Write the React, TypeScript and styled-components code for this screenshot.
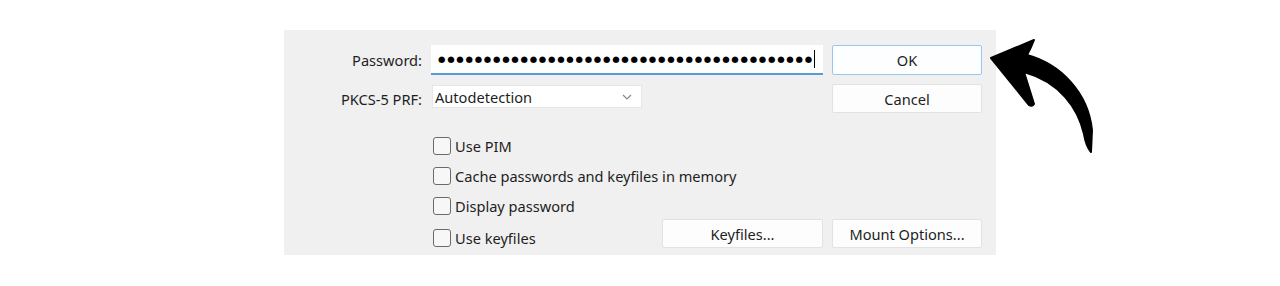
import React from "react";
import styled, { createGlobalStyle } from "styled-components";

const Global = createGlobalStyle`
  html, body { margin: 0; padding: 0; background: #ffffff; }
  body { font-family: "Noto Sans", "Segoe UI", sans-serif; }
`;

const Page = styled.div`
  position: relative;
  width: 1280px;
  height: 286px;
  padding-top: 30px;
  box-sizing: border-box;
`;

const Panel = styled.div`
  margin-left: 284px;
  width: 712px;
  height: 225px;
  background: #f0f0f0;
  box-sizing: border-box;
  padding-top: 15px;
  display: flex;
  flex-direction: column;
  font-size: 14.6px;
  color: #1e1e1e;
`;

const Row = styled.div<{ $h: number; $mt?: number }>`
  display: flex;
  align-items: center;
  height: ${(p) => p.$h}px;
  margin-top: ${(p) => p.$mt ?? 0}px;
`;

const Label = styled.div`
  width: 138px;
  text-align: right;
  flex: none;
  margin-right: 9px;
`;

const Field = styled.div`
  width: 392px;
  height: 100%;
  flex: none;
  margin-right: 9px;
  display: flex;
  align-items: center;
  justify-content: space-between;
`;

const PasswordBox = styled.div`
  width: 100%;
  height: 100%;
  background: #ffffff;
  border-bottom: 2px solid #5b9bd5;
  box-sizing: border-box;
  display: flex;
  align-items: center;
  padding-left: 7px;
`;

const Dots = styled.span`
  font-family: "DejaVu Sans", sans-serif;
  font-size: 8.5px;
  letter-spacing: 1.75px;
  color: #000;
  white-space: nowrap;
`;

const Caret = styled.span`
  display: inline-block;
  width: 1px;
  height: 18px;
  background: #000;
  margin-left: 0px;
`;

const Select = styled.div`
  margin-left: 1px;
  width: 210px;
  height: 23px;
  background: #ffffff;
  border: 1px solid #e6e6e6;
  box-sizing: border-box;
  display: flex;
  align-items: center;
  justify-content: space-between;
  padding: 0 9px 0 2px;
  align-self: flex-start;
  margin-top: 1px;
`;

const Button = styled.div<{ $w?: number; $focus?: boolean }>`
  width: ${(p) => p.$w ?? 150}px;
  height: 100%;
  flex: none;
  box-sizing: border-box;
  background: ${(p) => (p.$focus ? "#fdfeff" : "#fdfdfd")};
  border: 1px solid ${(p) => (p.$focus ? "#9cc6ee" : "#e2e2e2")};
  border-radius: 2px;
  display: flex;
  align-items: center;
  justify-content: center;
  color: #1e1e1e;
`;

const Check = styled.label<{ $shift?: number }>`
  display: flex;
  align-items: center;
  gap: 4px;
  margin-left: 2px;
  margin-top: ${(p) => (p.$shift ?? 0) * 2}px;
`;

const Box = styled.span`
  width: 18px;
  height: 18px;
  box-sizing: border-box;
  border: 1px solid #6a6a6a;
  border-radius: 3px;
  background: #f7f7f7;
`;

const ArrowSvg = styled.svg`
  position: absolute;
  left: 980px;
  top: 30px;
`;

const checks = ["Use PIM", "Cache passwords and keyfiles in memory", "Display password"];

export default function App() {
  return (
    <Page>
      <Global />
      <Panel>
        <Row $h={30}>
          <Label>Password:</Label>
          <Field>
            <PasswordBox>
              <Dots>{"●".repeat(41)}</Dots>
              <Caret />
            </PasswordBox>
          </Field>
          <Button $focus>OK</Button>
        </Row>
        <Row $h={29} $mt={9}>
          <Label>PKCS-5 PRF:</Label>
          <Field>
            <Select>
              <span>Autodetection</span>
              <svg width="10" height="6" viewBox="0 0 10 6">
                <path d="M1 1 L5 5 L9 1" fill="none" stroke="#888" strokeWidth="1.2" />
              </svg>
            </Select>
          </Field>
          <Button>Cancel</Button>
        </Row>
        {checks.map((c, i) => (
          <Row key={c} $h={30} $mt={i === 0 ? 18 : 0}>
            <Label />
            <Field>
              <Check>
                <Box />
                {c}
              </Check>
            </Field>
          </Row>
        ))}
        <Row $h={29} $mt={-2}>
          <Label />
          <Field>
            <Check $shift={4}>
              <Box />
              Use keyfiles
            </Check>
            <Button $w={161}>Keyfiles...</Button>
          </Field>
          <Button>Mount Options...</Button>
        </Row>
      </Panel>
      <ArrowSvg width="130" height="130" viewBox="0 0 130 130">
        <path
          d="M11,28 L54,10 Q51,18 47,25 C80,34 108,62 112,100 L111,122 Q106,116 104,104 C98,78 80,52 44,42 L54,74 Q52,77 49,75 Z"
          fill="#000"
          stroke="#000"
          strokeWidth="2"
          strokeLinejoin="round"
        />
      </ArrowSvg>
    </Page>
  );
}
